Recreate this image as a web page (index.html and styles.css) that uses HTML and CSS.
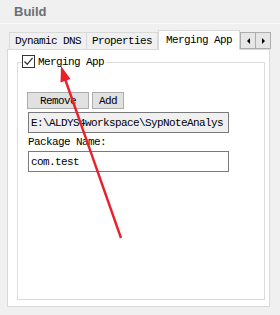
FILE: index.html
```html
<!DOCTYPE html>
<html lang="en">
<head>
    <meta charset="UTF-8">
    <meta name="viewport" content="width=device-width, initial-scale=1.0">
    <title>Build</title>
    <link rel="stylesheet" href="styles.css">
</head>
<body>

<div class="header">Build</div>

<div class="tabs">
    <div class="tabstrip">
        <div class="tab first">Dynamic DNS</div>
        <div class="tab">Properties</div>
        <div class="tab active">Merging App</div>
        <div class="scroller">
            <span class="scroll-btn"><span class="tri left"></span></span>
            <span class="scroll-btn"><span class="tri right"></span></span>
        </div>
    </div>

    <div class="panel">
        <div class="group">
            <label class="legend">
                <span class="check">
                    <svg width="11" height="11" viewBox="0 0 11 11"><path d="M1.5 5.5 L4.2 8.3 L9.6 1.8" fill="none" stroke="#333" stroke-width="1.3"/></svg>
                </span>
                Merging App
            </label>

            <div class="buttons">
                <button class="btn remove">Remove</button>
                <button class="btn add">Add</button>
            </div>
            <input class="field readonly" type="text" value="E:\ALDYS4workspace\SypNoteAnalys" readonly>
            <div class="caption">Package Name:</div>
            <input class="field" type="text" value="com.test">
        </div>
    </div>
</div>

<!-- annotation arrow drawn over the screenshot -->
<svg class="annotation" width="280" height="315" viewBox="0 0 280 315">
    <line x1="121" y1="238" x2="64" y2="76" stroke="#e8212b" stroke-width="2.4"/>
    <polygon points="61,66 70.5,79 60.5,82.5" fill="#e8212b"/>
</svg>

</body>
</html>
```

FILE: styles.css
```css
html, body {
    margin: 0;
    padding: 0;
}
body {
    width: 280px;
    height: 315px;
    overflow: hidden;
    background-color: #f0f0f0;
    font-family: "Liberation Mono", "DejaVu Sans Mono", monospace;
    font-size: 11px;
    letter-spacing: -0.6px;
    color: #000;
    position: relative;
}
.header {
    height: 23px;
    line-height: 24px;
    padding-left: 14px;
    border-bottom: 1px solid #fbfbfb;
    font-family: "Liberation Sans", Arial, sans-serif;
    font-size: 13px;
    font-weight: bold;
    letter-spacing: 0;
    color: #6b6f75;
}
.tabs {
    margin: 6px 0 0 7px;
    width: 263px;
}
.tabstrip {
    display: flex;
    align-items: flex-end;
    height: 19px;
    padding-left: 2px;
}
.tab {
    box-sizing: border-box;
    height: 17px;
    line-height: 16px;
    padding: 0 5px;
    border-top: 1px solid #d9d9d9;
    border-right: 1px solid #d9d9d9;
    background: #f0f0f0;
    white-space: nowrap;
}
.tab.first {
    border-left: 1px solid #d9d9d9;
}
.tab.active {
    position: relative;
    z-index: 1;
    height: 20px;
    line-height: 18px;
    margin-bottom: -1px;
    padding: 0 7px;
    border-left: 1px solid #d9d9d9;
    background: #fff;
}
.scroller {
    display: flex;
    align-self: flex-start;
    margin-top: 2px;
}
.scroll-btn {
    box-sizing: border-box;
    width: 16px;
    height: 17px;
    border: 1px solid #adadad;
    background: #e6e6e6;
    display: flex;
    align-items: center;
    justify-content: center;
}
.scroll-btn + .scroll-btn {
    border-left: none;
    width: 15px;
}
.tri {
    width: 0;
    height: 0;
    border-top: 3px solid transparent;
    border-bottom: 3px solid transparent;
}
.tri.left {
    border-right: 3px solid #000;
}
.tri.right {
    border-left: 3px solid #000;
}
.panel {
    box-sizing: border-box;
    height: 258px;
    padding: 12px 4px 6px 9px;
    border: 1px solid #d9d9d9;
    background: #fff;
    display: flex;
    flex-direction: column;
}
.group {
    flex: 1;
    position: relative;
    border: 1px solid #dcdcdc;
    padding: 29px 0 0 9px;
}
.legend {
    position: absolute;
    top: -8px;
    left: 4px;
    display: flex;
    align-items: center;
    height: 13px;
    padding-right: 2px;
    background: #fff;
    white-space: nowrap;
}
.check {
    box-sizing: border-box;
    width: 13px;
    height: 13px;
    margin-right: 3px;
    border: 1px solid #333;
    background: #fff;
    display: flex;
    align-items: center;
    justify-content: center;
}
.buttons {
    display: flex;
    gap: 3px;
}
.btn {
    box-sizing: border-box;
    height: 17px;
    padding: 0;
    border: 1px solid #adadad;
    background: #e1e1e1;
    font: inherit;
    letter-spacing: inherit;
    color: #000;
    line-height: 14px;
}
.btn.remove {
    width: 62px;
}
.btn.add {
    width: 32px;
}
.field {
    display: block;
    box-sizing: border-box;
    width: 201px;
    height: 21px;
    margin: 0 0 0 1px;
    padding: 0 2px;
    border: 1px solid #7a7a7a;
    background: #fff;
    font: inherit;
    letter-spacing: inherit;
    color: #000;
    outline: none;
}
.field.readonly {
    margin-top: 3px;
    background: #f0f0f0;
}
.caption {
    margin: 3px 0 0 1px;
    height: 12px;
    line-height: 12px;
    margin-bottom: 3px;
}
.annotation {
    position: absolute;
    top: 0;
    left: 0;
    pointer-events: none;
}
```
